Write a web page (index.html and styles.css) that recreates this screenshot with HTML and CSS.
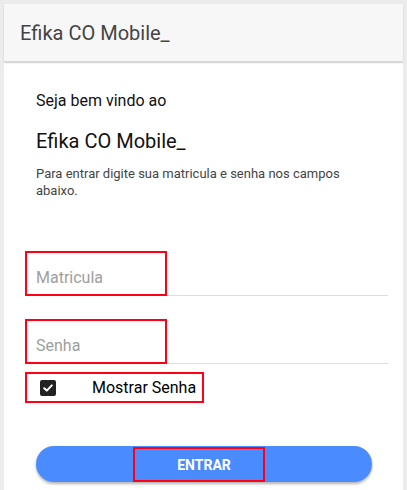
FILE: index.html
```html
<!DOCTYPE html>
<html lang="pt">
<head>
<meta charset="utf-8">
<link rel="stylesheet" href="styles.css">
</head>
<body>
<div class="app">
  <header class="header">
    <div class="title">Efika CO Mobile_</div>
  </header>
  <main class="card">
    <div class="welcome">Seja bem vindo ao</div>
    <div class="brand">Efika CO Mobile_</div>
    <p class="intro">Para entrar digite sua matricula e senha nos campos abaixo.</p>
    <div class="form">
      <div class="field field-first">
        <div class="input"><span class="placeholder">Matricula</span></div>
      </div>
      <div class="field">
        <div class="input"><span class="placeholder">Senha</span></div>
      </div>
      <div class="check-row">
        <span class="checkbox">
          <svg width="12" height="12" viewBox="0 0 12 12"><path d="M2.2 6.2 L4.8 8.6 L9.8 3.4" fill="none" stroke="#fff" stroke-width="2" stroke-linecap="round" stroke-linejoin="round"/></svg>
        </span>
        <span class="check-label">Mostrar Senha</span>
      </div>
    </div>
    <div class="actions">
      <div class="button"><span class="button-label">ENTRAR</span></div>
    </div>
  </main>
</div>
</body>
</html>
```
FILE: styles.css
```css
html, body {
  margin: 0;
  padding: 0;
}
body {
  background: #ececec;
  font-family: Roboto, "Liberation Sans", Arial, sans-serif;
  height: 490px;
  overflow: hidden;
}
.app {
  margin: 4px 4px 0 4px;
  display: flex;
  flex-direction: column;
}
.header {
  height: 57px;
  background: #f7f7f7;
  border-bottom: 1px solid #d8d8d8;
  box-shadow: 0 1px 2px rgba(0,0,0,0.12);
  display: flex;
  align-items: center;
  padding-left: 16px;
  position: relative;
  z-index: 1;
}
.title {
  font-size: 20px;
  color: #444;
  line-height: 24px;
  margin-top: 1px;
}
.card {
  background: #fff;
  margin-top: 1px;
  padding: 28px 15px 0 21px;
  height: 427px;
  box-sizing: border-box;
}
.welcome {
  font-size: 16px;
  line-height: 20px;
  color: #111;
  margin-left: 11px;
}
.brand {
  font-size: 20px;
  line-height: 24px;
  color: #111;
  margin: 18px 0 0 11px;
}
.intro {
  font-size: 13px;
  line-height: 17px;
  color: #444;
  margin: 12px 0 0 11px;
  padding-right: 8px;
}
.form {
  margin-top: 52px;
  display: flex;
  flex-direction: column;
}
.field {
  border-bottom: 1px solid #dddddd;
  margin-top: 23px;
}
.field-first {
  margin-top: 0;
}
.input {
  width: 129px;
  height: 41px;
  border: 2px solid #ff0015;
  display: flex;
  align-items: flex-end;
  padding-left: 9px;
  margin-bottom: -1px;
}
.placeholder {
  font-size: 16px;
  color: #9e9e9e;
  line-height: 20px;
  margin-bottom: 6px;
}
.check-row {
  margin-top: 8px;
  width: 162px;
  height: 27px;
  border: 2px solid #ff0015;
  display: flex;
  align-items: center;
  padding-left: 13px;
}
.checkbox {
  width: 16px;
  height: 16px;
  background: #222;
  border-radius: 2px;
  display: flex;
  align-items: center;
  justify-content: center;
}
.check-label {
  font-size: 16px;
  color: #000;
  margin-left: 36px;
  line-height: 20px;
}
.actions {
  margin-top: 43px;
  padding: 0 16px 0 11px;
}
.button {
  height: 36px;
  border-radius: 18px;
  background: #4a8bff;
  box-shadow: 0 2px 3px rgba(0,0,0,0.3);
  display: flex;
  justify-content: center;
}
.button-label {
  width: 118px;
  height: 31px;
  margin-top: 1px;
  border: 2px solid #ff0015;
  color: #fff;
  font-weight: 700;
  font-size: 14px;
  display: flex;
  align-items: center;
  justify-content: center;
  padding-left: 10px;
  margin-left: -10px;
}
```
